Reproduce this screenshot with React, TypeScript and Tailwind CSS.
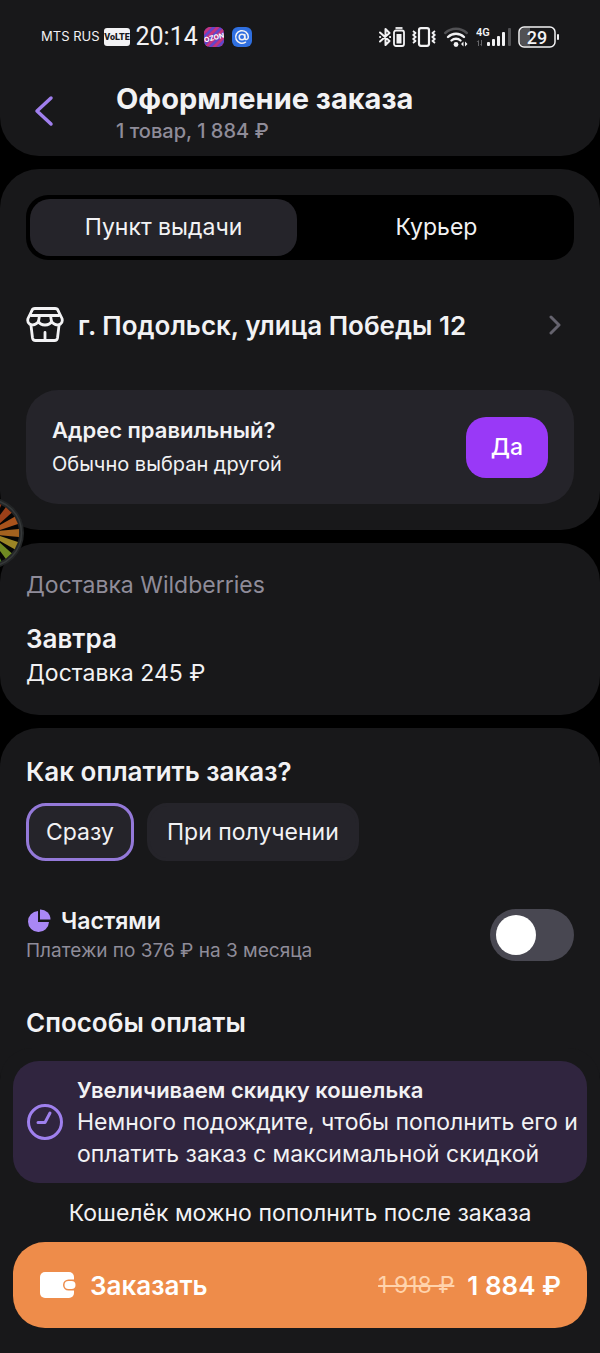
import { useState } from 'react'

const tabs = [
  { id: 1, title: "Пункт выдачи" },
  { id: 2, title: "Курьер" },
]

const payTimes = [
  { id: 1, title: "Сразу" },
  { id: 2, title: "При получении" },
]

const spokes = [
  { angle: -72, color: "#8a3314" },
  { angle: -48, color: "#9c4019" },
  { angle: -24, color: "#a9531c" },
  { angle: 0, color: "#a3621f" },
  { angle: 24, color: "#9c8526" },
  { angle: 48, color: "#6f8a22" },
  { angle: 72, color: "#4c7a22" },
]

function StatusBar() {
  return (
    <div className="flex h-6 items-center justify-between pr-10 pl-[41px] text-[#f2f2f4]">
      <div className="flex items-center">
        <span className="text-[13px]">MTS RUS</span>
        <svg className="ml-1 h-5 w-[26px]" viewBox="0 0 26 20">
          <rect y="1" width="26" height="18" rx="3" fill="#f2f2f4" />
          <text x="13" y="13" textAnchor="middle" fontSize="9" fontWeight="900" fontFamily="Roboto, sans-serif" fill="#18181a">VoLTE</text>
        </svg>
        <span className="ml-1.5 font-[Roboto] text-[25px] leading-6">20:14</span>
        <svg className="ml-1.5 h-5 w-5" viewBox="0 0 20 20">
          <defs>
            <clipPath id="ozonClip"><rect width="20" height="20" rx="6" /></clipPath>
          </defs>
          <g clipPath="url(#ozonClip)">
            <rect width="20" height="20" fill="#8b36a8" />
            <path d="M-2 8L8-2M-2 16L16-2M0 22L22 0M8 22L22 8M16 22l6-6" stroke="#c4357f" strokeWidth="2.4" />
            <path d="M-2 12L12-2M-2 20L20-2M4 22L22 4M12 22L22 12" stroke="#5a4bd0" strokeWidth="1.6" />
            <text x="10" y="13" textAnchor="middle" fontSize="7" fontWeight="700" fill="#fff" transform="rotate(-14 10 10)">OZON</text>
          </g>
        </svg>
        <svg className="ml-2 h-5 w-5" viewBox="0 0 20 20" fill="none" stroke="#f2f2f4" strokeWidth="1.5" strokeLinecap="round">
          <rect width="20" height="20" rx="6" fill="#2f6fe0" stroke="none" />
          <circle cx="10" cy="10" r="2.8" />
          <path d="M12.8 7.4v3.4c0 2.4 3.5 2.2 3.5-.8a6.3 6.3 0 1 0-2.8 5.2" />
        </svg>
      </div>

      <div className="flex items-center">
        {/* bluetooth */}
        <svg className="h-5 w-3" viewBox="0 0 12 20" fill="none" stroke="currentColor" strokeWidth="2" strokeLinejoin="round" strokeLinecap="round">
          <path d="M1 5.5L10.5 14 6.5 18V2l4 4L1 14.5" />
          <path d="M1 10h.2M11 10h.2" />
        </svg>
        <svg className="ml-0.5 h-5 w-3" viewBox="0 0 12 20" fill="none" stroke="currentColor" strokeWidth="1.8">
          <path d="M2.5 1h7" />
          <rect x="1" y="3.5" width="10" height="15.5" rx="2" />
          <rect x="3.5" y="7" width="5" height="9.5" fill="currentColor" stroke="none" />
        </svg>
        {/* vibration */}
        <svg className="ml-[7px] h-5 w-6" viewBox="0 0 24 20" fill="none" stroke="currentColor" strokeWidth="2.2">
          <rect x="7" y="1.2" width="10" height="17.600" rx="2" />
          <path d="M1 4l2.500 2L1.200 8l2.500 2-2.500 2 2.300 2L1 16M23 4l-2.500 2 2.300 2-2.500 2 2.500 2-2.300 2 2.500 2" strokeWidth="1.8" strokeLinejoin="round" />
        </svg>
        <svg className="ml-2 h-5 w-6" viewBox="0 0 24 20" fill="none" stroke="currentColor" strokeWidth="2.4" strokeLinecap="round">
          <path d="M1.200 6a16 16 0 0 1 21.600 0" stroke="#515154" />
          <path d="M4 10a11.500 11.500 0 0 1 16 0M7.500 13.500a6.500 6.500 0 0 1 9 0" />
          <circle cx="12" cy="17.500" r="2.400" fill="currentColor" stroke="none" />
          <path d="M19.500 14.500L17 17l2.500 2.500zM21 14.500l2.500 2.500-2.500 2.500z" fill="currentColor" stroke="none" />
        </svg>
        <svg className="ml-2 h-5 w-[35px]" viewBox="0 0 35 20" fill="currentColor">
          <text x="0" y="9" fontSize="11" fontWeight="600" fontFamily="Roboto, sans-serif">4G</text>
          <path d="M2 19v-4H.5L3 13v6zM5 13v4H4l2 2.500V13z" fill="#66666a" />
          <rect x="11" y="15" width="3" height="4" rx="1" />
          <rect x="16" y="12" width="3" height="7" rx="1" />
          <rect x="21" y="9" width="3" height="10" rx="1" />
          <rect x="26" y="5" width="3" height="14" rx="1" />
          <rect x="32" y="1" width="3" height="18" rx="1" fill="#515154" />
        </svg>
        <svg className="ml-[7px] h-[22px] w-[42px]" viewBox="0 0 42 22">
          <path d="M12 2H6a4 4 0 0 0-4 4v10a4 4 0 0 0 4 4h6z" fill="#515154" />
          <rect x="1" y="1" width="36" height="20" rx="5" fill="none" stroke="#f2f2f4" strokeWidth="1.500" />
          <rect x="39" y="8" width="2" height="6" rx="1" fill="#f2f2f4" />
          <text x="19" y="17.500" textAnchor="middle" fontSize="18" fontFamily="Roboto, sans-serif" fontWeight="500" fill="#f2f2f4">29</text>
        </svg>
      </div>
    </div>
  )
}

function Header() {
  return (
    <header className="rounded-b-[39px] bg-[#18181a] pt-[25px] pb-[11px]">
      <StatusBar />
      <div className="mt-8 flex items-center">
        <button type="button" aria-label="Назад" className="ml-[33px] pb-1 text-[#a07fee]">
          <svg className="h-8 w-6" viewBox="0 0 24 32" fill="none" stroke="currentColor" strokeWidth="3.500" strokeLinecap="round" strokeLinejoin="round">
            <path d="M18 3L4 16l14 13" />
          </svg>
        </button>
        <div className="ml-[59px]">
          <h1 className="text-[29px] leading-9 font-bold">Оформление заказа</h1>
          <p className="text-xl leading-7 font-medium text-[#8f8c99]">1 товар, 1 884 ₽</p>
        </div>
      </div>
    </header>
  )
}

function Wheel() {
  return (
    <svg className="absolute top-[496px] left-0 h-[74px] w-6" viewBox="0 0 24 74">
      <circle cx="-12" cy="37" r="36" fill="#232526" />
      <circle cx="-12" cy="37" r="33.5" fill="none" stroke="#36393a" strokeWidth="1.5" />
      <circle cx="-12" cy="37" r="31" fill="#060606" />
      {spokes.map((spoke) =>
        <path key={spoke.angle} d="M-12 36L19 33v8L-12 38z" fill={spoke.color} transform={`rotate(${spoke.angle} -12 37)`} />
      )}
    </svg>
  )
}

export default function App() {
  const [tab, setTab] = useState(1)
  const [payTime, setPayTime] = useState(1)
  const [parts, setParts] = useState(false)

  return (
    <div className="relative min-h-screen bg-black font-[Inter,'Noto_Sans',sans-serif] text-[#f2f2f4]">
      <Header />

      <main className="mt-[13px] flex flex-col gap-[13px]">
        {/* delivery point */}
        <section className="rounded-[39px] bg-[#18181a] p-[26px]">
          <div className="flex gap-1.5 rounded-[22px] bg-black p-1">
            {tabs.map((item) =>
              <button
                key={item.id}
                type="button"
                onClick={() => setTab(item.id)}
                className={`h-[57px] flex-1 rounded-[20px] text-[23px] ${tab === item.id ? 'bg-[#25242a]' : ''}`}>
                {item.title}
              </button>
            )}
          </div>

          <a href="#address" className="mt-[47px] flex h-9 items-center">
            <svg className="h-9 w-[38px] shrink-0" viewBox="0 0 38 36" fill="none" stroke="currentColor" strokeWidth="2.800" strokeLinejoin="round" strokeLinecap="round">
              <path d="M9 1.500h20q2.500 0 3.200 2.300L36 11.500q1 3.500-1.500 5.500-2.500 1.600-5.500.4-2.500-.9-3.500-3-1.500 3.600-6.500 3.600t-6.500-3.600q-1 2.100-3.500 3-3 1.200-5.500-.4Q1 15 2 11.500l3.800-7.700Q6.500 1.500 9 1.500z" />
              <path d="M5 8.500h28M13.500 8.500l-1 6M24.500 8.500l1 6" />
              <path d="M5 18.500L6.500 31q.4 2.500 3 2.500h19q2.600 0 3-2.500L33 18.500M19 25.500V33" />
            </svg>
            <span className="ml-[14px] text-[26px] font-semibold">г. Подольск, улица Победы 12</span>
            <svg className="mr-[13px] ml-auto h-5 w-3" viewBox="0 0 12 20" fill="none" stroke="#65636e" strokeWidth="3" strokeLinecap="round" strokeLinejoin="round">
              <path d="M2 2l8 8-8 8" />
            </svg>
          </a>

          <div className="mt-[47px] flex items-center justify-between rounded-[32px] bg-[#25242a] px-[26px] py-6">
            <div>
              <h2 className="text-[22px] leading-8 font-semibold">Адрес правильный?</h2>
              <p className="mt-0.5 text-xl leading-8">Обычно выбран другой</p>
            </div>
            <button type="button" className="h-[61px] w-[82px] rounded-[20px] bg-[#9939f7] text-[23px] font-medium text-white">Да</button>
          </div>
        </section>

        <section className="rounded-[39px] bg-[#18181a] p-[26px]">
          <p className="text-[23px] leading-8 text-[#8f8c99]">Доставка Wildberries</p>
          <h2 className="mt-5 text-[26px] leading-9 font-semibold">Завтра</h2>
          <p className="text-[23px] leading-8">Доставка 245 ₽</p>
        </section>

        {/* payment */}
        <section className="rounded-[39px] bg-[#18181a] px-[26px] pt-[26px] pb-[71px]">
          <h2 className="text-[26px] leading-9 font-semibold">Как оплатить заказ?</h2>
          <div className="mt-[13px] flex gap-[13px]">
            {payTimes.map((item) =>
              <button
                key={item.id}
                type="button"
                onClick={() => setPayTime(item.id)}
                className={`h-[58px] rounded-[20px] border-3 bg-[#25242a] px-[17px] text-[23px] ${payTime === item.id ? 'border-[#9479d9]' : 'border-[#25242a]'}`}>
                {item.title}
              </button>
            )}
          </div>

          <div className="mt-11 flex items-center justify-between">
            <div>
              <label htmlFor="parts" className="flex items-center text-[23px] leading-8 font-semibold">
                <svg className="mr-[9px] h-[26px] w-[26px]" viewBox="0 0 26 26" fill="#a987f5">
                  <path d="M12 3v11h11A10.500 10.500 0 1 1 12 3z" />
                  <path d="M14 1.500a10 10 0 0 1 10.500 10H14z" />
                </svg>
                Частями
              </label>
              <p className="text-[19px] leading-7 text-[#8f8c99]">Платежи по 376 ₽ на 3 месяца</p>
            </div>
            <input
              id="parts"
              type="checkbox"
              role="switch"
              checked={parts}
              onChange={() => setParts((value) => !value)}
              className="h-[52px] w-[84px] appearance-none rounded-full bg-[#484751] p-[6px] before:block before:h-10 before:w-10 before:rounded-full before:bg-white checked:bg-[#9939f7] checked:before:ml-8"
            />
          </div>

          <h2 className="mt-10 text-[26px] leading-9 font-semibold">Способы оплаты</h2>
        </section>
      </main>

      <footer className="relative -mt-16 rounded-t-[32px] bg-[#18181a] px-[13px] pt-[13px] pb-[25px]">
        <div className="flex items-center rounded-[26px] bg-[#30253f] py-[13px] pr-2 pl-[13px]">
          <svg className="h-[38px] w-[38px] shrink-0" viewBox="0 0 38 38" fill="none" stroke="#9f80ee" strokeWidth="3" strokeLinecap="round" strokeLinejoin="round">
            <circle cx="19" cy="19" r="16.500" />
            <path d="M24 10l-5 9.500h-7" />
          </svg>
          <div className="ml-[13px] text-[23px] leading-8">
            <h3 className="text-[22px] leading-8 font-semibold">Увеличиваем скидку кошелька</h3>
            <p>Немного подождите, чтобы пополнить его и оплатить заказ с максимальной скидкой</p>
          </div>
        </div>

        <p className="mt-3.5 mb-[13px] text-center text-[23px] leading-8">Кошелёк можно пополнить после заказа</p>

        <button type="button" className="flex h-[86px] w-full items-center rounded-[32px] bg-[#ee8c4a] pr-[26px] pl-[27px] text-[26px] font-semibold text-white">
          <svg className="h-[26px] w-[36px]" viewBox="0 0 36 26">
            <rect width="34" height="26" rx="5" fill="#fff" />
            <path d="M36 7.500h-7.500a5.500 5.500 0 0 0 0 11H36z" fill="#ee8c4a" />
            <rect x="24.500" y="9" width="11" height="8" rx="4" fill="#fff" />
          </svg>
          <span className="ml-[14px]">Заказать</span>
          <s className="ml-auto text-[23px] font-normal text-[#ffd3ac]">1 918 ₽</s>
          <span className="ml-[13px]">1 884 ₽</span>
        </button>
      </footer>

      <Wheel />
    </div>
  )
}
